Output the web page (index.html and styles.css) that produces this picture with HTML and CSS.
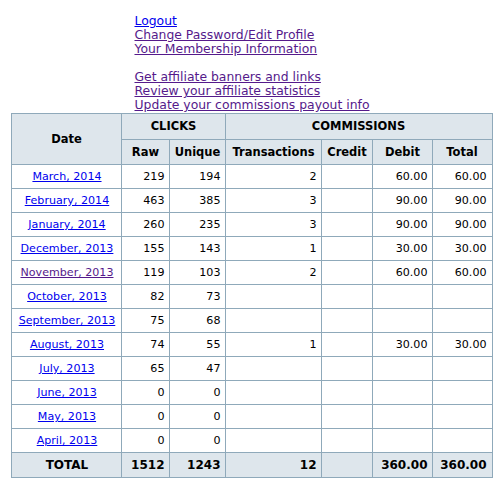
FILE: index.html
```html
<!DOCTYPE html>
<html>
<head>
<meta charset="utf-8">
<link rel="stylesheet" href="styles.css">
</head>
<body>
<div class="menu">
  <a href="#" class="link">Logout</a><br>
  <a href="#" class="link visited">Change Password/Edit Profile</a><br>
  <a href="#" class="link visited">Your Membership Information</a><br>
  <br>
  <a href="#" class="link visited">Get affiliate banners and links</a><br>
  <a href="#" class="link visited">Review your affiliate statistics</a><br>
  <a href="#" class="link visited">Update your commissions payout info</a>
</div>
<table class="stats">
  <colgroup>
    <col class="c-date"><col class="c-raw"><col class="c-uniq"><col class="c-trans"><col class="c-credit"><col class="c-debit"><col class="c-total">
  </colgroup>
  <thead>
    <tr class="h1">
      <th rowspan="2">Date</th>
      <th colspan="2">CLICKS</th>
      <th colspan="4">COMMISSIONS</th>
    </tr>
    <tr class="h2">
      <th>Raw</th><th>Unique</th><th>Transactions</th><th>Credit</th><th>Debit</th><th>Total</th>
    </tr>
  </thead>
  <tbody>
    <tr><td class="d"><a href="#" class="link">March, 2014</a></td><td>219</td><td>194</td><td>2</td><td></td><td>60.00</td><td>60.00</td></tr>
    <tr><td class="d"><a href="#" class="link">February, 2014</a></td><td>463</td><td>385</td><td>3</td><td></td><td>90.00</td><td>90.00</td></tr>
    <tr><td class="d"><a href="#" class="link">January, 2014</a></td><td>260</td><td>235</td><td>3</td><td></td><td>90.00</td><td>90.00</td></tr>
    <tr><td class="d"><a href="#" class="link">December, 2013</a></td><td>155</td><td>143</td><td>1</td><td></td><td>30.00</td><td>30.00</td></tr>
    <tr><td class="d"><a href="#" class="link visited">November, 2013</a></td><td>119</td><td>103</td><td>2</td><td></td><td>60.00</td><td>60.00</td></tr>
    <tr><td class="d"><a href="#" class="link">October, 2013</a></td><td>82</td><td>73</td><td></td><td></td><td></td><td></td></tr>
    <tr><td class="d"><a href="#" class="link">September, 2013</a></td><td>75</td><td>68</td><td></td><td></td><td></td><td></td></tr>
    <tr><td class="d"><a href="#" class="link">August, 2013</a></td><td>74</td><td>55</td><td>1</td><td></td><td>30.00</td><td>30.00</td></tr>
    <tr><td class="d"><a href="#" class="link">July, 2013</a></td><td>65</td><td>47</td><td></td><td></td><td></td><td></td></tr>
    <tr><td class="d"><a href="#" class="link">June, 2013</a></td><td>0</td><td>0</td><td></td><td></td><td></td><td></td></tr>
    <tr><td class="d"><a href="#" class="link">May, 2013</a></td><td>0</td><td>0</td><td></td><td></td><td></td><td></td></tr>
    <tr><td class="d"><a href="#" class="link">April, 2013</a></td><td>0</td><td>0</td><td></td><td></td><td></td><td></td></tr>
  </tbody>
  <tfoot>
    <tr class="tot"><td class="d">TOTAL</td><td>1512</td><td>1243</td><td>12</td><td></td><td>360.00</td><td>360.00</td></tr>
  </tfoot>
</table>
</body>
</html>
```

FILE: styles.css
```css
body {
  margin: 8px;
  background: #ffffff;
  font-family: "DejaVu Sans", Verdana, sans-serif;
  color: #000000;
}

.menu {
  width: fit-content;
  margin: 0 auto;
  padding-top: 6px;
  padding-bottom: 1px;
  font-size: 12.4px;
  line-height: 14px;
}

.link {
  color: #0000ee;
  text-decoration: underline;
}

.link.visited {
  color: #551a8b;
}

.stats {
  border-collapse: collapse;
  table-layout: fixed;
  width: 481px;
  margin: 0 auto;
  border: 1px solid #8fa9ba;
  font-size: 11.1px;
}

.c-date { width: 110px; }
.c-raw { width: 48px; }
.c-uniq { width: 56px; }
.c-trans { width: 96px; }
.c-credit { width: 51px; }
.c-debit { width: 60px; }
.c-total { width: 59px; }

.stats th,
.stats td {
  border: 1px solid #8fa9ba;
  padding: 0 5px 0 4px;
  white-space: nowrap;
  overflow: hidden;
}

.stats th {
  background: #dee6ec;
  font-weight: bold;
  font-size: 11.5px;
  text-align: center;
  color: #000000;
}

.h1 th { line-height: 25px; }
.h2 th { line-height: 24px; }

.stats td {
  line-height: 23px;
  text-align: right;
}

.stats td.d {
  text-align: center;
  padding: 0 2px;
}

.tot td {
  background: #dee6ec;
  font-weight: bold;
  font-size: 12px;
  line-height: 24px;
}
```
